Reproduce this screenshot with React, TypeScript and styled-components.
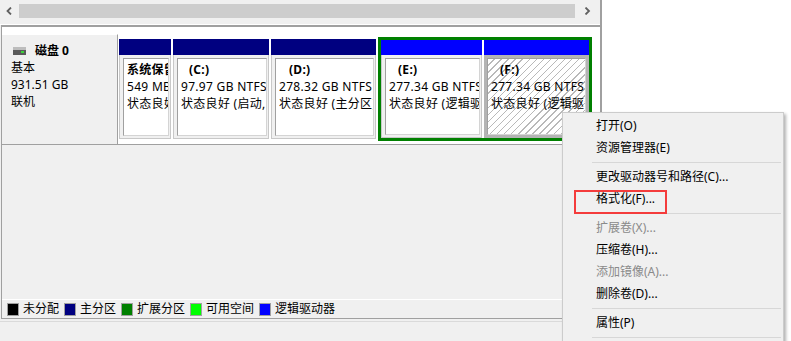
import styled, { createGlobalStyle } from "styled-components";

const GlobalStyle = createGlobalStyle`
  html, body { margin: 0; padding: 0; }
  body {
    background: #f0f0f0;
    font-family: "Noto Sans", "Noto Sans CJK SC", sans-serif;
    font-size: 12px;
    color: #000;
  }
  * { box-sizing: border-box; }
`;

const Screen = styled.div`
  position: relative;
  display: flex;
  width: 791px;
  height: 341px;
  overflow: hidden;
`;

const MainWindow = styled.div`
  width: 600px;
  display: flex;
  flex-direction: column;
`;

const SidePanel = styled.div`
  flex: 1;
  background: #fff;
  border-left: 2px solid #a0a0a0;
`;

const HScroll = styled.div`
  height: 25px;
  display: flex;
  align-items: flex-start;
  padding: 4px 4px 0 0;
  border-bottom: 1px solid #fff;
`;

const ArrowBtn = styled.div<{ $w: number }>`
  width: ${(p) => p.$w}px;
  height: 14px;
  display: flex;
  align-items: center;
  justify-content: center;
`;

const Thumb = styled.div`
  width: 556px;
  height: 14px;
  background: #cdcdcd;
`;

const Track = styled.div`
  flex: 1;
`;

const LowerPane = styled.div`
  flex: 1;
  margin-left: 1px;
  display: flex;
  flex-direction: column;
  border-top: 2px solid #a0a0a0;
  border-left: 1px solid #a0a0a0;
  border-bottom: 1px solid #a0a0a0;
`;

const DiskList = styled.div`
  padding-top: 7px;
  background: #fff;
`;

const DiskRow = styled.div`
  display: flex;
  height: 111px;
`;

const DiskLabel = styled.div`
  width: 116px;
  padding: 7px 0 0 9px;
  line-height: 17px;
  background: #f0f0f0;
  border-top: 1px solid #fff;
  border-right: 1px solid #a0a0a0;
  border-bottom: 1px solid #a0a0a0;
`;

const DiskTitle = styled.div`
  display: flex;
  align-items: center;
  gap: 9px;
  font-weight: bold;
  svg { margin-left: 2px; }
`;

const PartitionArea = styled.div`
  flex: 1;
  display: flex;
  align-items: center;
  gap: 2px;
  padding-left: 1px;
  background: #fff;
  border-bottom: 1px solid #a0a0a0;
`;

const Block = styled.div<{ $w: number; $h: string }>`
  width: ${(p) => p.$w}px;
  height: ${(p) => p.$h};
  display: flex;
  flex-direction: column;
`;

const BlockHeader = styled.div<{ $color: string; $h: number }>`
  height: ${(p) => p.$h}px;
  background: ${(p) => p.$color};
`;

const BlockBody = styled.div<{ $selected?: boolean }>`
  flex: 1;
  display: flex;
  min-height: 0;
  background: #f0f0f0;
  padding: ${(p) => (p.$selected ? "0" : "3px 1px 2px 3px")};
  border: ${(p) => (p.$selected ? "3px solid #b4b4b4" : "1px solid #c8c8c8")};
  border-top-width: ${(p) => (p.$selected ? "3px" : "0")};
`;

const Inner = styled.div<{ $hatched?: boolean }>`
  flex: 1;
  min-width: 0;
  overflow: hidden;
  padding: 2px 0 0 3px;
  line-height: 17px;
  letter-spacing: 0.3px;
  border: 1px solid;
  border-color: #a0a0a0 #d4d4d4 #d4d4d4 #a0a0a0;
  background: ${(p) =>
    p.$hatched
      ? "repeating-linear-gradient(135deg, #fff 0 4px, #b9b9b9 4px 5px)"
      : "#fff"};
`;

const InfoLine = styled.div<{ $bold?: boolean; $indent?: number }>`
  white-space: nowrap;
  overflow: hidden;
  font-weight: ${(p) => (p.$bold ? "bold" : "normal")};
  padding-left: ${(p) => p.$indent ?? 0}px;
`;

const Extended = styled.div`
  width: 214px;
  height: 104px;
  display: flex;
  gap: 2px;
  border: 3px solid #008000;
`;

const EmptySpace = styled.div`
  flex: 1;
`;

const Legend = styled.div`
  display: flex;
  align-items: center;
  height: 19px;
  padding-left: 5px;
  border-top: 1px solid #fff;
  line-height: 18px;
`;

const LegendItem = styled.div`
  display: flex;
  align-items: center;
  gap: 4px;
  margin-right: 5px;
`;

const Swatch = styled.span<{ $c: string }>`
  width: 12px;
  height: 13px;
  background: ${(p) => p.$c};
  border: 1px solid #a0a0a0;
`;

const StatusBar = styled.div`
  height: 20px;
  margin-top: 2px;
  border-top: 1px solid #dadada;
`;

const Menu = styled.div`
  position: absolute;
  left: 562px;
  top: 112px;
  width: 222px;
  height: 240px;
  padding-top: 2px;
  background: #f0f0f0;
  border: 1px solid #cccccc;
  box-shadow: 2px 2px 3px rgba(0, 0, 0, 0.3);
`;

const MenuItem = styled.div<{ $disabled?: boolean }>`
  height: 22px;
  line-height: 22px;
  padding-left: 33px;
  color: ${(p) => (p.$disabled ? "#8a8a8a" : "#000")};
  white-space: nowrap;
`;

const MenuSep = styled.div`
  height: 1px;
  margin: 3px 2px 3px 29px;
  background: #d7d7d7;
`;

const Highlight = styled.div`
  position: absolute;
  left: 574px;
  top: 190px;
  width: 93px;
  height: 24px;
  border: 2px solid #f43c3c;
`;

type Part = {
  name: string;
  indent: number;
  size: string;
  status: string;
  width: number;
};

const primaries: Part[] = [
  { name: "系统保留", indent: 0, size: "549 MB NTFS", status: "状态良好 (系统, 活动, 主分区)", width: 52 },
  { name: "(C:)", indent: 8, size: "97.97 GB NTFS", status: "状态良好 (启动, 页面文件, 故障转储, 主分区)", width: 96 },
  { name: "(D:)", indent: 10, size: "278.32 GB NTFS", status: "状态良好 (主分区)", width: 105 },
];

const logicals: (Part & { selected?: boolean })[] = [
  { name: "(E:)", indent: 9, size: "277.34 GB NTFS", status: "状态良好 (逻辑驱动器)", width: 101 },
  { name: "(F:)", indent: 9, size: "277.34 GB NTFS", status: "状态良好 (逻辑驱动器)", width: 105, selected: true },
];

const legend = [
  { c: "#000000", t: "未分配" },
  { c: "#000080", t: "主分区" },
  { c: "#008000", t: "扩展分区" },
  { c: "#00ff00", t: "可用空间" },
  { c: "#0000ff", t: "逻辑驱动器" },
];

type MenuEntry = { t: string; disabled?: boolean } | "sep";

const menu: MenuEntry[] = [
  { t: "打开(O)" },
  { t: "资源管理器(E)" },
  "sep",
  { t: "更改驱动器号和路径(C)..." },
  { t: "格式化(F)..." },
  "sep",
  { t: "扩展卷(X)...", disabled: true },
  { t: "压缩卷(H)..." },
  { t: "添加镜像(A)...", disabled: true },
  { t: "删除卷(D)..." },
  "sep",
  { t: "属性(P)" },
  "sep",
  { t: "帮助(H)" },
];

function Chevron({ dir }: { dir: "left" | "right" }) {
  const d = dir === "left" ? "M5 0.5 L1.5 4 L5 7.5" : "M1.5 0.5 L5 4 L1.5 7.5";
  return (
    <svg width="7" height="8" viewBox="0 0 7 8">
      <path d={d} fill="none" stroke="#606060" strokeWidth="1.8" />
    </svg>
  );
}

function DiskIcon() {
  return (
    <svg width="13" height="8" viewBox="0 0 13 8">
      <rect x="0" y="0" width="13" height="3" fill="#bdbdbd" />
      <rect x="0" y="3" width="13" height="5" fill="#5a5a5a" />
      <rect x="8" y="4" width="3" height="2" fill="#3bd33b" />
    </svg>
  );
}

function PartitionInfo({ p, hatched }: { p: Part; hatched?: boolean }) {
  return (
    <Inner $hatched={hatched}>
      <InfoLine $bold $indent={p.indent}>{p.name}</InfoLine>
      <InfoLine>{p.size}</InfoLine>
      <InfoLine>{p.status}</InfoLine>
    </Inner>
  );
}

export default function App() {
  return (
    <>
      <GlobalStyle />
      <Screen>
        <MainWindow>
          <HScroll>
            <ArrowBtn $w={19}>
              <Chevron dir="left" />
            </ArrowBtn>
            <Thumb />
            <Track />
            <ArrowBtn $w={18}>
              <Chevron dir="right" />
            </ArrowBtn>
          </HScroll>
          <LowerPane>
            <DiskList>
              <DiskRow>
                <DiskLabel>
                  <DiskTitle>
                    <DiskIcon />
                    <span>磁盘 0</span>
                  </DiskTitle>
                  <div>基本</div>
                  <div>931.51 GB</div>
                  <div>联机</div>
                </DiskLabel>
                <PartitionArea>
                  {primaries.map((p) => (
                    <Block key={p.name} $w={p.width} $h="100px">
                      <BlockHeader $color="#000080" $h={16} />
                      <BlockBody>
                        <PartitionInfo p={p} />
                      </BlockBody>
                    </Block>
                  ))}
                  <Extended>
                    {logicals.map((p) => (
                      <Block key={p.name} $w={p.width} $h="100%">
                        <BlockHeader $color="#0000ff" $h={15} />
                        <BlockBody $selected={p.selected}>
                          <PartitionInfo p={p} hatched={p.selected} />
                        </BlockBody>
                      </Block>
                    ))}
                  </Extended>
                </PartitionArea>
              </DiskRow>
            </DiskList>
            <EmptySpace />
            <Legend>
              {legend.map((l) => (
                <LegendItem key={l.t}>
                  <Swatch $c={l.c} />
                  <span>{l.t}</span>
                </LegendItem>
              ))}
            </Legend>
          </LowerPane>
          <StatusBar />
        </MainWindow>
        <SidePanel />
        <Menu>
          {menu.map((m, i) =>
            m === "sep" ? (
              <MenuSep key={i} />
            ) : (
              <MenuItem key={i} $disabled={m.disabled}>
                {m.t}
              </MenuItem>
            )
          )}
        </Menu>
        <Highlight />
      </Screen>
    </>
  );
}
